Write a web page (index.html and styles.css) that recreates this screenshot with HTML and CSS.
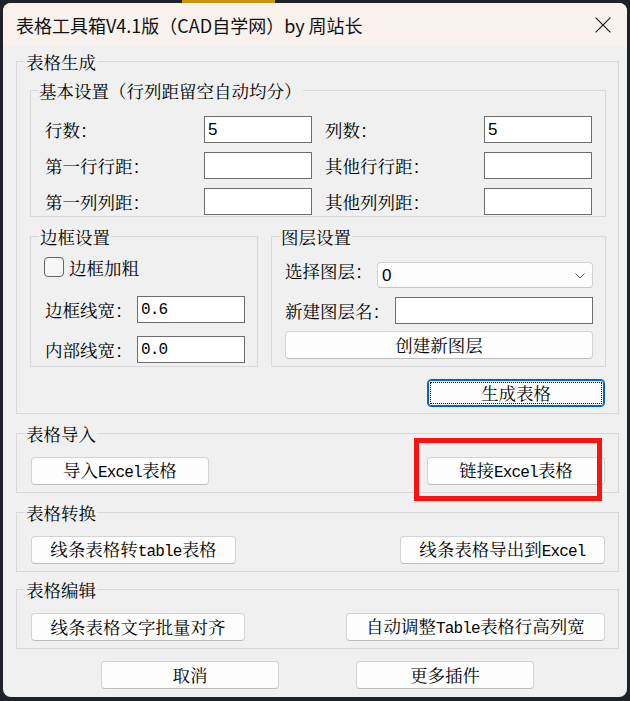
FILE: index.html
```html
<!DOCTYPE html>
<html lang="zh-CN">
<head>
<meta charset="utf-8">
<title>表格工具箱</title>
<link rel="stylesheet" href="styles.css">
</head>
<body>
<div class="desk-tab"></div>
<div class="window">
  <div class="titlebar">
    <span class="title">表格工具箱V4.1版（CAD自学网）by 周站长</span>
    <svg class="close" width="16" height="16" viewBox="0 0 16 16"><path d="M0.6 0.6L15.4 15.4M15.4 0.6L0.6 15.4" stroke="#1a1a1a" stroke-width="1.15" fill="none"/></svg>
  </div>
  <div class="content">
    <fieldset class="grp gen">
      <legend>表格生成</legend>
      <fieldset class="sub basic">
        <legend>基本设置（行列距留空自动均分）</legend>
        <div class="grid4">
          <label>行数：</label><input class="tb num" type="text" value="5">
          <label>列数：</label><input class="tb num" type="text" value="5">
          <label>第一行行距：</label><input class="tb" type="text">
          <label>其他行行距：</label><input class="tb" type="text">
          <label>第一列列距：</label><input class="tb" type="text">
          <label>其他列列距：</label><input class="tb" type="text">
        </div>
      </fieldset>
      <div class="row2">
        <fieldset class="sub frame">
          <legend>边框设置</legend>
          <div class="chk-row"><span class="chk"></span><span>边框加粗</span></div>
          <div class="frow first"><label class="lw">边框线宽：</label><input class="tb mono w108" type="text" value="0.6"></div>
          <div class="frow second"><label class="lw">内部线宽：</label><input class="tb mono w108" type="text" value="0.0"></div>
        </fieldset>
        <fieldset class="sub layer">
          <legend>图层设置</legend>
          <div class="lrow combo-row">
            <label class="lw top">选择图层：</label>
            <div class="combo"><span class="cv">0</span><svg class="chev" width="10" height="6" viewBox="0 0 10 6"><path d="M0.5 0.5L5 5L9.5 0.5" stroke="#4a4a4a" stroke-width="1" fill="none"/></svg></div>
          </div>
          <div class="lrow name-row"><label class="lw2">新建图层名：</label><input class="tb grow" type="text"></div>
          <button class="btn full">创建新图层</button>
        </fieldset>
      </div>
      <div class="gen-row"><button class="btn focus w178">生成表格</button></div>
    </fieldset>

    <fieldset class="grp btns g1">
      <legend>表格导入</legend>
      <button class="btn w178">导入<span class="lat">Excel</span>表格</button>
      <button class="btn w178">链接<span class="lat">Excel</span>表格</button>
    </fieldset>

    <fieldset class="grp btns g2">
      <legend>表格转换</legend>
      <button class="btn w205">线条表格转<span class="lat">table</span>表格</button>
      <button class="btn w205">线条表格导出到<span class="lat">Excel</span></button>
    </fieldset>

    <fieldset class="grp btns g3">
      <legend>表格编辑</legend>
      <button class="btn w214">线条表格文字批量对齐</button>
      <button class="btn w259">自动调整<span class="lat">Table</span>表格行高列宽</button>
    </fieldset>

    <div class="footer">
      <button class="btn w178">取消</button>
      <button class="btn w178">更多插件</button>
    </div>
  </div>
  <div class="redbox"></div>
</div>
</body>
</html>
```

FILE: styles.css
```css
* { box-sizing: border-box; }

html, body {
  margin: 0;
  width: 630px;
  height: 701px;
  overflow: hidden;
  background: #1f2329;
}

body {
  position: relative;
  font-family: "Noto Serif CJK SC", "Noto Sans CJK SC", serif;
  font-size: 17.5px;
  color: #000;
}

.desk-tab {
  position: absolute;
  left: 182px;
  top: 0;
  width: 93px;
  height: 3px;
  background: #c8940e;
}

.window {
  position: relative;
  margin: 3px 0 0 3px;
  width: 624px;
  height: 694px;
  background: #f0f0f0;
  border-radius: 8px;
  overflow: hidden;
}

.titlebar {
  height: 43px;
  background: #f9f1ee;
  display: flex;
  align-items: center;
  justify-content: space-between;
  padding: 0 16px 0 13px;
}

.title {
  font-family: "Noto Sans CJK SC", sans-serif;
  font-size: 18px;
  line-height: 20px;
  color: #111;
  white-space: nowrap;
}

.close { display: block; }

.content {
  padding: 6px 8px 0 13px;
}

fieldset {
  margin: 0;
  min-width: 0;
  border: 1px solid #d9d9d9;
}

legend {
  padding: 0 1px;
  line-height: 19px;
  white-space: nowrap;
}

.gen > legend { margin-left: -5px; }
.basic > legend { margin-left: -7px; }
.frame > legend { margin-left: -6px; }
.layer > legend { margin-left: -5px; }
.btns > legend { margin-left: -6px; }

label { white-space: nowrap; }

.gen {
  padding: 10px 12px 6px 13px;
}

.basic {
  padding: 16px 12px 1px 14px;
}

.grid4 {
  display: grid;
  grid-template-columns: 146px 108px 146px 108px;
  grid-auto-rows: 27px;
  column-gap: 13px;
  row-gap: 9px;
  align-items: center;
}

.tb {
  height: 27px;
  margin: 0;
  padding: 0 3px;
  border: 1px solid #6e6e6e;
  border-radius: 0;
  background: #fff;
  font: inherit;
  color: #000;
  outline: none;
}

.num {
  font-family: "Liberation Sans", Arial, sans-serif;
  font-size: 17px;
}

.mono {
  font-family: "Liberation Mono", monospace;
  font-size: 16px;
  letter-spacing: -0.85px;
}

.w108 { width: 108px; }
.grow { flex: 1; min-width: 0; }

.row2 {
  display: flex;
  gap: 13px;
  margin-top: 10px;
}

.frame {
  flex: 0 0 228px;
  padding: 11px 11px 3px 14px;
}

.layer {
  flex: 1;
  padding: 16px 12px 7px 13px;
}

.chk-row {
  display: flex;
  align-items: center;
  height: 20px;
  gap: 5px;
  margin-left: -1px;
}

.chk {
  width: 20px;
  height: 20px;
  border: 1px solid #646464;
  border-radius: 4px;
  background: #f7f7f7;
}

.frow {
  display: flex;
  align-items: center;
}
.frow.first { margin-top: 19px; }
.frow.second { margin-top: 13px; }

.lw { width: 92px; flex: none; }
.lw2 { width: 110px; flex: none; }

.lrow { display: flex; align-items: center; }
.combo-row { align-items: flex-start; }
.lw.top { line-height: 17px; }
.name-row { margin-top: 9px; }

.combo {
  flex: 1;
  height: 26px;
  display: flex;
  align-items: center;
  justify-content: space-between;
  padding: 0 7px 0 4px;
  border: 1px solid #d2d2d2;
  border-bottom-color: #c4c4c4;
  border-radius: 4px;
  background: #fdfdfd;
}

.cv {
  font-family: "Liberation Sans", Arial, sans-serif;
  font-size: 17px;
  line-height: 20px;
  padding-top: 2px;
}

.chev { display: block; margin-top: 1px; }

.btn {
  height: 28px;
  margin: 0;
  padding: 0;
  border: 1px solid #d3d3d3;
  border-bottom-color: #bcbcbc;
  border-radius: 4px;
  background: #fdfdfd;
  font: inherit;
  color: #000;
  line-height: 24px;
  white-space: nowrap;
  text-align: center;
}

.lat {
  font-family: "Liberation Mono", monospace;
  font-size: 16px;
  letter-spacing: -0.85px;
}

.full {
  display: block;
  width: 100%;
  margin-top: 7px;
}

.w178 { width: 178px; }
.w205 { width: 205px; }
.w214 { width: 214px; }
.w259 { width: 259px; }

.gen-row {
  display: flex;
  justify-content: flex-end;
  margin-top: 12px;
  padding-right: 1px;
}

.focus {
  position: relative;
  border: 1px solid #0067c0;
  box-shadow: inset 0 0 0 1px #0067c0;
}
.focus::after {
  content: "";
  position: absolute;
  inset: 2px;
  border: 1px dotted #000;
  border-radius: 1px;
}

.btns {
  display: flex;
  justify-content: space-between;
  padding: 14px 13px 7px 14px;
}

.g1 { margin-top: 10px; }
.g2 { margin-top: 10px; }
.g3 { margin-top: 8px; }

.footer {
  display: flex;
  gap: 77px;
  margin-top: 12px;
  padding-left: 85px;
}

.redbox {
  position: absolute;
  left: 411px;
  top: 435px;
  width: 188px;
  height: 63px;
  border: 5px solid #fd1212;
}
```
